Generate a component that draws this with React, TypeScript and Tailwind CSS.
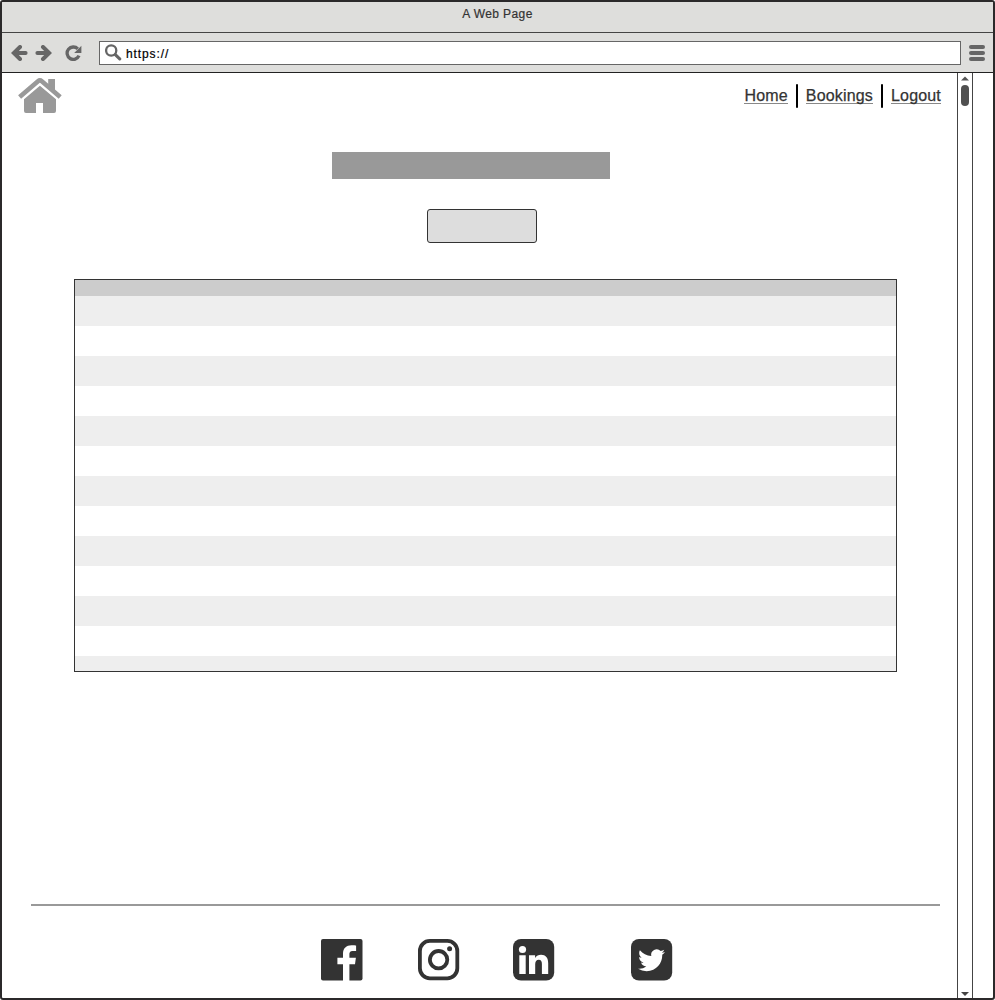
import React from "react";

const ROWS = Array.from({ length: 13 }, (_, i) => i);

function BackArrow() {
  return (
    <svg width="17" height="16" viewBox="0 0 17 16" fill="none" stroke="#666" strokeWidth="4">
      <path d="M9 2 2.8 8 9 14M4 8h10.6" strokeLinecap="round" strokeLinejoin="miter" />
    </svg>
  );
}

function ReloadIcon() {
  return (
    <svg width="17" height="16" viewBox="0 0 17 16">
      <path d="M12.8 3.9A6.2 6.2 0 1 0 14 10.7" fill="none" stroke="#666" strokeWidth="3.3" />
      <path d="M16.4 0.8V8H9.2Z" fill="#666" />
    </svg>
  );
}

function SearchIcon() {
  return (
    <svg width="17" height="17" viewBox="0 0 17 17" fill="none" stroke="#666">
      <circle cx="6.2" cy="6.5" r="5.1" strokeWidth="2.3" />
      <path d="m10.3 10.6 4.4 4.3" strokeWidth="3.1" strokeLinecap="round" />
    </svg>
  );
}

function HomeIcon() {
  return (
    <svg width="44" height="36" viewBox="0 0 44 36" fill="#999">
      <path d="M30.2 1H37v14l-6.8-6z" />
      <path d="M1.6 19 20 3.2q1.9-1.6 3.8 0L42.2 19" fill="none" stroke="#999" strokeWidth="4.6" />
      <path d="M6 21.2 21.9 7.8 38 21.2V33q0 2-2 2H25V25h-7v10H8q-2 0-2-2z" />
    </svg>
  );
}

function Facebook() {
  return (
    <svg width="42" height="42" viewBox="0 0 42 42">
      <rect width="41.5" height="41.5" rx="2" fill="#333" />
      <path d="M22 42V25.2h-5.6v-6.4H22v-4.2c0-5.4 3.4-8.4 8.5-8.4 2.2 0 3.8.1 4.6.3v5.4h-3.5c-2.6 0-3.2 1.4-3.2 3.2v3.7h6.5l-.9 6.4h-5.6V42z" fill="#fff" />
    </svg>
  );
}

function Instagram() {
  return (
    <svg width="42" height="42" viewBox="0 0 42 42" fill="none" stroke="#333">
      <rect x="1.9" y="1.9" width="37.4" height="37.4" rx="10" strokeWidth="3.8" />
      <circle cx="20.6" cy="20.7" r="8.7" strokeWidth="3.8" />
      <circle cx="31.6" cy="9.8" r="2.5" fill="#333" stroke="none" />
    </svg>
  );
}

function LinkedIn() {
  return (
    <svg width="42" height="42" viewBox="0 0 42 42">
      <rect width="41.2" height="41.5" rx="8" fill="#333" />
      <g fill="#fff">
        <circle cx="9.5" cy="10.5" r="3.6" />
        <path d="M6.3 16.2h6.4v18.9H6.3zM16 16.2h6.1v2.7c1.3-2 3.4-3.1 6-3.1 4.5 0 7.1 2.9 7.1 8.4v10.9h-6.3V25c0-2.6-.8-4.3-3.1-4.3-2.5 0-3.6 1.9-3.6 4.6v9.8H16z" />
      </g>
    </svg>
  );
}

function Twitter() {
  return (
    <svg width="42" height="42" viewBox="0 0 42 42">
      <rect width="41.2" height="41.5" rx="8" fill="#333" />
      <path
        transform="translate(7.1 7.8) scale(1.12)"
        fill="#fff"
        d="M23.953 4.57a10 10 0 01-2.825.775 4.958 4.958 0 002.163-2.723c-.951.555-2.005.959-3.127 1.184a4.92 4.92 0 00-8.384 4.482C7.69 8.095 4.067 6.13 1.64 3.162a4.822 4.822 0 00-.666 2.475c0 1.71.87 3.213 2.188 4.096a4.904 4.904 0 01-2.228-.616v.06a4.923 4.923 0 003.946 4.827 4.996 4.996 0 01-2.212.085 4.936 4.936 0 004.604 3.417 9.867 9.867 0 01-6.102 2.105c-.39 0-.779-.023-1.17-.067a13.995 13.995 0 007.557 2.209c9.053 0 13.998-7.496 13.998-13.985 0-.21 0-.42-.015-.63A9.935 9.935 0 0024 4.59z"
      />
    </svg>
  );
}

function NavLink({ children }: { children: string }) {
  return (
    <a href="#" className="mb-px h-[17px] border-b border-[#888] leading-[17px] whitespace-nowrap [-webkit-text-stroke:0.25px_#333]">
      {children}
    </a>
  );
}

export default function App() {
  return (
    <div className="flex h-[1000px] w-[995px] flex-col overflow-hidden rounded-[3px] border-2 border-[#2b292a] bg-white font-['Liberation_Sans',sans-serif] text-[#333]">
      <header className="flex h-[31px] shrink-0 justify-center border-b border-[#444] bg-[#dededc] pt-1">
        <h1 className="h-4 text-[12px] leading-4 tracking-[0.4px] [-webkit-text-stroke:0.2px_#333]">A Web Page</h1>
      </header>
      <div className="flex h-10 shrink-0 items-center border-b border-[#222] bg-[#dededc] pl-[9px]">
        <BackArrow />
        <span className="ml-[7px] -scale-x-100">
          <BackArrow />
        </span>
        <span className="ml-[13px]">
          <ReloadIcon />
        </span>
        <div className="ml-[17px] flex h-6 w-[862px] items-center border border-[#666] bg-white pl-[5px]">
          <SearchIcon />
          <span className="ml-1 pt-0.5 text-[12px] leading-4 tracking-[0.9px] text-black [-webkit-text-stroke:0.2px_#000]">https://</span>
        </div>
        <div className="ml-2 flex w-4 flex-col gap-[2px]">
          <span className="h-1 rounded-full bg-[#666]" />
          <span className="h-1 rounded-full bg-[#666]" />
          <span className="h-1 rounded-full bg-[#666]" />
        </div>
      </div>
      <div className="flex min-h-0 flex-1">
        <main className="flex w-[955px] flex-col">
          <div className="flex h-[79px] items-start justify-between pr-4 pl-4">
            <span className="pt-[5px]">
              <HomeIcon />
            </span>
            <nav className="mt-[11px] flex h-6 items-center gap-2 text-[16px] tracking-[0.17px]">
              <NavLink>Home</NavLink>
              <span className="h-6 w-0.5 rounded-full bg-black" />
              <NavLink>Bookings</NavLink>
              <span className="h-6 w-0.5 rounded-full bg-black" />
              <NavLink>Logout</NavLink>
            </nav>
          </div>
          <div className="ml-[330px] h-[27px] w-[278px] bg-[#999]" />
          <button aria-label="Action" className="mt-[30px] ml-[425px] h-[34px] w-[110px] rounded-[3px] border border-[#333] bg-[#ddd]" />
          <section className="mt-9 ml-[72px] h-[393px] w-[823px] overflow-hidden border border-[#333]">
            <div className="h-4 bg-[#ccc]" />
            {ROWS.map((i) => (
              <div key={i} className="h-[30px] odd:bg-white even:bg-[#eee]" />
            ))}
          </section>
          <footer className="mt-[232px] ml-[29px] w-[909px] border-t-2 border-[#999] pt-[33px]">
            <div className="flex pl-[290px]">
              <Facebook />
              <span className="ml-[55px]">
                <Instagram />
              </span>
              <span className="ml-[53px]">
                <LinkedIn />
              </span>
              <span className="ml-[76px]">
                <Twitter />
              </span>
            </div>
          </footer>
        </main>
        <aside className="flex w-4 flex-col items-center border-x border-[#444] pt-[3px] pb-px">
          <svg width="8" height="5" viewBox="0 0 8 5" fill="#555">
            <path d="m4 0.5 4 4H0z" />
          </svg>
          <div className="mt-1 h-[21px] w-2 rounded-full bg-[#505050]" />
          <svg className="mt-auto" width="8" height="5" viewBox="0 0 8 5" fill="#444">
            <path d="m4 4 4-4H0z" />
          </svg>
        </aside>
      </div>
    </div>
  );
}
